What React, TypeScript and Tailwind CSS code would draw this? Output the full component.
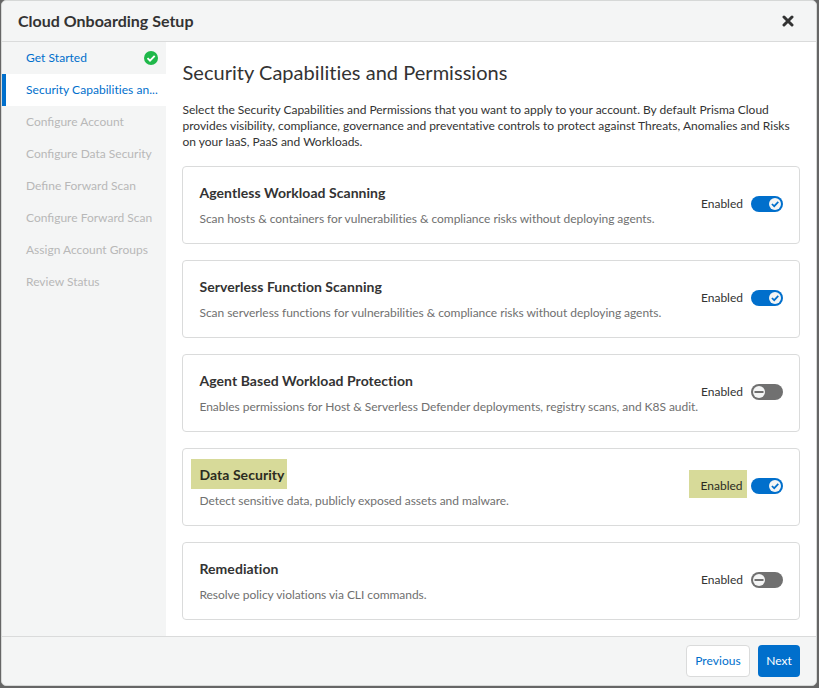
import React from "react";

type Capability = {
  title: string;
  description: string;
  on: boolean;
  highlighted?: boolean;
};

const capabilities: Capability[] = [
  {
    title: "Agentless Workload Scanning",
    description: "Scan hosts & containers for vulnerabilities & compliance risks without deploying agents.",
    on: true,
  },
  {
    title: "Serverless Function Scanning",
    description: "Scan serverless functions for vulnerabilities & compliance risks without deploying agents.",
    on: true,
  },
  {
    title: "Agent Based Workload Protection",
    description: "Enables permissions for Host & Serverless Defender deployments, registry scans, and K8S audit.",
    on: false,
  },
  {
    title: "Data Security",
    description: "Detect sensitive data, publicly exposed assets and malware.",
    on: true,
    highlighted: true,
  },
  {
    title: "Remediation",
    description: "Resolve policy violations via CLI commands.",
    on: false,
  },
];

const upcomingSteps = [
  "Configure Account",
  "Configure Data Security",
  "Define Forward Scan",
  "Configure Forward Scan",
  "Assign Account Groups",
  "Review Status",
];

function Toggle({ on }: { on: boolean }) {
  return (
    <svg width="32" height="16" viewBox="0 0 32 16" role="switch" aria-checked={on}>
      <rect width="32" height="16" rx="8" fill={on ? "#006fcc" : "#707070"} />
      <circle cx={on ? 24 : 8} cy="8" r="6" fill="#f4f5f5" />
      {on ? (
        <path d="M20.9 8l2.3 2.2 4.1-4.3" fill="none" stroke="#006fcc" strokeWidth="1.7" />
      ) : (
        <path d="M3.5 8h9" stroke="#707070" strokeWidth="2" />
      )}
    </svg>
  );
}

function CapabilityCard({ title, description, on, highlighted }: Capability) {
  return (
    <section className="flex h-[78px] items-center justify-between rounded border border-[#dadbdb] px-4">
      <div className="min-w-0 pt-px whitespace-nowrap">
        <h2 className="flex h-[26px] items-center text-[14px] font-bold tracking-[0.045px] text-[#333333]">
          <span
            className={
              highlighted
                ? "mb-[2px] -ml-2 flex h-[30px] w-24 items-center bg-[#d7da99] pt-[2px] pl-[8.5px] text-[#2b2c1f]"
                : "pl-[0.5px]"
            }
          >
            {title}
          </span>
        </h2>
        <p className="flex h-[26px] items-center pl-[0.5px] text-[12px] tracking-[-0.045px] text-[#707070]">
          {description}
        </p>
      </div>
      <div className="flex shrink-0 items-center pb-[2px]">
        <span
          className={
            highlighted
              ? "mr-1 mb-1 flex h-7 w-[58px] items-center bg-[#d7da99] pt-[3px] pl-[11.5px] text-[12px] text-[#2b2c1f]"
              : "mr-2 text-[12px] text-[#333333]"
          }
        >
          Enabled
        </span>
        <Toggle on={on} />
      </div>
    </section>
  );
}

export default function App() {
  return (
    <div className="h-[688px] w-[819px] bg-[#666666] pr-[2px] pb-[2px] pl-px font-['Lato',sans-serif]">
      <div className="flex h-[686px] w-[816px] flex-col overflow-hidden rounded-[5px] border border-[#d6d8d7] bg-[#f4f5f5]">
        <header className="flex h-[41px] shrink-0 items-center justify-between border-b border-[#dadbdb] pr-[22px] pl-4">
          <h1 className="text-[16px] font-bold text-[#333333]">Cloud Onboarding Setup</h1>
          <button type="button" aria-label="Close">
            <svg width="12" height="12" viewBox="0 0 12 12">
              <path d="M2 2l8 8M10 2l-8 8" stroke="#333333" strokeWidth="3" strokeLinecap="round" />
            </svg>
          </button>
        </header>
        <div className="flex min-h-0 flex-1">
          <nav className="w-[164px] shrink-0 text-[12px] whitespace-nowrap">
            <div className="flex h-8 items-center justify-between pr-2 pl-6 tracking-[0.04px] text-[#006fcc]">
              Get Started
              <svg width="14" height="14" viewBox="0 0 14 14">
                <circle cx="7" cy="7" r="7" fill="#1fb84a" />
                <path d="M3.5 7.2l2.5 2.5 4.7-4.8" fill="none" stroke="white" strokeWidth="1.9" />
              </svg>
            </div>
            <div className="flex h-8 items-center border-l-4 border-[#006fcc] bg-white pl-5 tracking-[0.04px] text-[#006fcc]">
              Security Capabilities an...
            </div>
            {upcomingSteps.map((step) => (
              <div key={step} className="flex h-8 items-center pl-6 text-[#b8b8b8]">
                {step}
              </div>
            ))}
          </nav>
          <main className="min-w-0 flex-1 bg-white px-4 pt-4">
            <h2 className="h-8 pl-[0.5px] text-[20px] leading-[29px] tracking-[0.03px] whitespace-nowrap text-[#333333]">
              Security Capabilities and Permissions
            </h2>
            <p className="mt-3 mb-4 pl-[0.5px] text-[12px] leading-4 tracking-[-0.015px] whitespace-nowrap text-[#333333]">
              Select the Security Capabilities and Permissions that you want to apply to your account. By default Prisma Cloud
              <br />
              provides visibility, compliance, governance and preventative controls to protect against Threats, Anomalies and Risks
              <br />
              on your IaaS, PaaS and Workloads.
            </p>
            <div className="flex flex-col gap-4">
              {capabilities.map((capability) => (
                <CapabilityCard key={capability.title} {...capability} />
              ))}
            </div>
          </main>
        </div>
        <footer className="flex h-[49px] shrink-0 items-center justify-end gap-2 border-t border-[#dadbdb] pr-4 text-[12px]">
          <button type="button" className="h-8 w-16 rounded border border-[#dadbdb] bg-white tracking-[0.06px] text-[#006fcc]">
            Previous
          </button>
          <button type="button" className="h-8 w-[42px] rounded bg-[#006fcc] text-white">
            Next
          </button>
        </footer>
      </div>
    </div>
  );
}
